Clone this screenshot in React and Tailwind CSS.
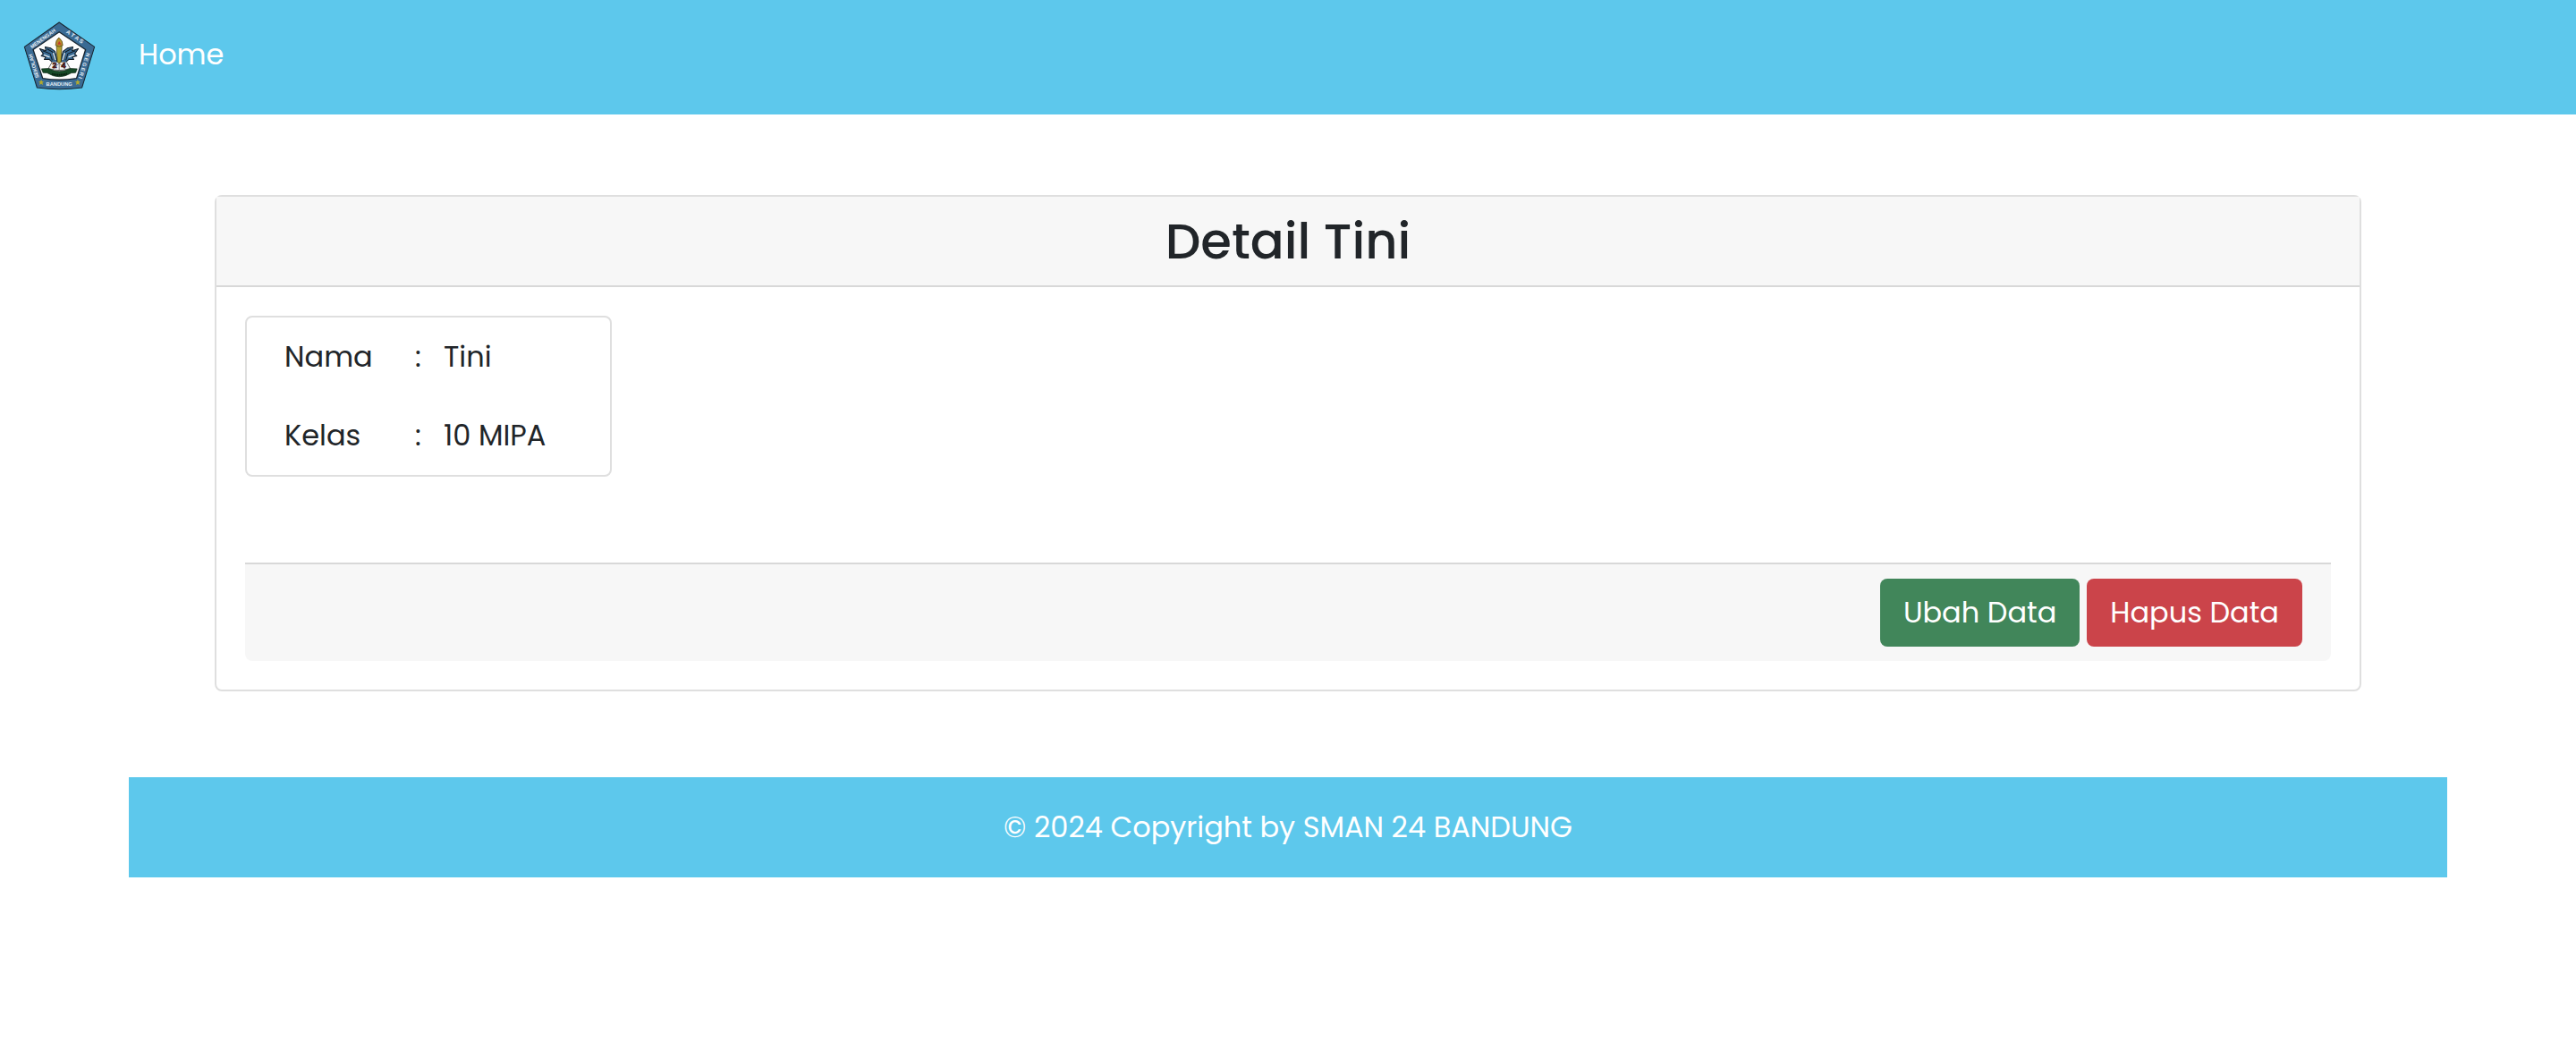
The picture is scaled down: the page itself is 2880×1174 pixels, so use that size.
const rows = [
  ["Nama", "Tini"],
  ["Kelas", "10 MIPA"],
];

function Wing() {
  return (
    <g strokeLinejoin="round">
      <path
        d="M131 163 L152 170 L149 157 L168 161 L182 172 L187 190 L189 209 L174 209 L162 198 L146 199 L151 191 L136 187 L143 180 Z"
        fill="#3a6b94"
        stroke="#101a24"
        strokeWidth="3"
      />
      <path d="M141 170 L166 180 L173 202 M156 164 L174 174 L181 202" fill="none" stroke="#101a24" strokeWidth="3" />
      <path d="M176 177 L183 201 M145 184 L164 191" fill="none" stroke="#e4edf3" strokeWidth="4" />
    </g>
  );
}

function SchoolLogo() {
  return (
    <svg viewBox="76 72 242 230" className="h-[77px] w-[81px]" role="img" aria-label="SMAN 24 Bandung">
      <defs>
        <path id="logo-left" d="M129 259 L103 174" />
        <path id="logo-upper-left" d="M105 163 L196 97" />
        <path id="logo-upper-right" d="M218 109 L292 161" />
        <path id="logo-right" d="M287 176 L259 266" />
      </defs>
      <path d="M196 75 L314 157 L272 293 Q196 303 122 293 L80 157 Z" fill="#3a6b94" stroke="#17242f" strokeWidth="3" strokeLinejoin="round" />
      <path d="M196 107 L284 166 L254 262 Q196 272 141 262 L109 166 Z" fill="#fdfdfd" stroke="#17242f" strokeWidth="4" strokeLinejoin="round" />
      <g fill="#e6eef4" fontFamily="Liberation Sans, sans-serif" fontWeight="700" fontSize="17">
        <text><textPath href="#logo-left">SEKOLAH</textPath></text>
        <text><textPath href="#logo-upper-left">MENENGAH</textPath></text>
        <text fontSize="19"><textPath href="#logo-upper-right">A T A S</textPath></text>
        <text><textPath href="#logo-right">N E G E R I</textPath></text>
        <text x="196" y="286" textAnchor="middle">BANDUNG</text>
      </g>
      <g fill="#b5ab2c">
        <path d="M136 266 l3 6 6 1 -5 4 2 7 -6 -4 -6 4 2 -7 -5 -4 6 -1z" />
        <path d="M258 266 l3 6 6 1 -5 4 2 7 -6 -4 -6 4 2 -7 -5 -4 6 -1z" />
      </g>
      <Wing />
      <g transform="translate(391 0) scale(-1 1)"><Wing /></g>
      <path d="M172 208 L160 229 Q196 241 233 229 L221 208" fill="#f5f5f5" stroke="#222" strokeWidth="2" />
      <path d="M196 207 V237 M174 233 L196 211 L218 233" fill="none" stroke="#444" strokeWidth="2" />
      <g fill="#8e1f26" stroke="#26100f" strokeWidth="2" fontFamily="Liberation Sans, sans-serif" fontWeight="700" fontSize="27">
        <text x="173" y="227">2</text>
        <text x="203" y="227">4</text>
      </g>
      <path d="M187 154 H205 L202 207 Q196 214 190 207 Z" fill="#b3a332" stroke="#3d3511" strokeWidth="2" />
      <path d="M184 152 Q184 134 195 126 Q209 137 208 152 Q196 160 184 152 Z" fill="#b98f2b" stroke="#3d3511" strokeWidth="2" />
      <path d="M190 149 L196 138 L203 149 Z" fill="#c3392d" />
      <path d="M137 230 L160 229 Q196 248 233 229 L256 230 L251 243 L237 244 Q196 269 156 244 L142 243 Z" fill="#164a27" stroke="#0c2414" strokeWidth="2" />
      <path d="M172 247 Q196 254 222 246" fill="none" stroke="#071a0d" strokeWidth="6" strokeDasharray="4 2" />
    </svg>
  );
}

export default function App() {
  return (
    <div className="min-h-screen bg-white font-['Poppins','Inter',sans-serif] text-[32px] leading-[48px] text-[#212529]">
      <nav className="flex h-32 items-start bg-[#5dc8ec] px-[26px] pt-6">
        <div className="flex items-center gap-12">
          <a href="#home"><SchoolLogo /></a>
          <a href="#home" className="mb-1 text-white">Home</a>
        </div>
      </nav>

      <main className="mx-[5%] px-24 pt-[90px] pb-24">
        <section className="rounded-lg border-2 border-[#dfdfdf]">
          <header className="border-b-2 border-[#d8d8d8] bg-[#f7f7f7] py-4">
            <h1 className="text-center text-[56px] leading-[67px] font-medium">Detail Tini</h1>
          </header>
          <div className="p-8">
            <div className="mb-24 w-[410px] rounded-lg border-2 border-[#dfdfdf] px-[42px]">
              <table>
                <tbody>
                  {rows.map(([label, value]) => (
                    <tr key={label} className="h-[88px]">
                      <th scope="row" className="w-[146px] text-left font-normal">{label}</th>
                      <td className="w-8">:</td>
                      <td>{value}</td>
                    </tr>
                  ))}
                </tbody>
              </table>
            </div>
            <footer className="flex justify-end gap-2 rounded-b-lg border-t-2 border-[#d8d8d8] bg-[#f7f7f7] px-8 py-4">
              <button type="button" className="h-[76px] rounded-lg bg-[#41865a] px-[26px] text-white">Ubah Data</button>
              <button type="button" className="h-[76px] rounded-lg bg-[#cb444a] px-[26px] text-white">Hapus Data</button>
            </footer>
          </div>
        </section>
      </main>

      <footer className="mx-[5%] bg-[#5dc8ec] py-8 text-center text-white">
        © 2024 Copyright by SMAN 24 BANDUNG
      </footer>
    </div>
  );
}
